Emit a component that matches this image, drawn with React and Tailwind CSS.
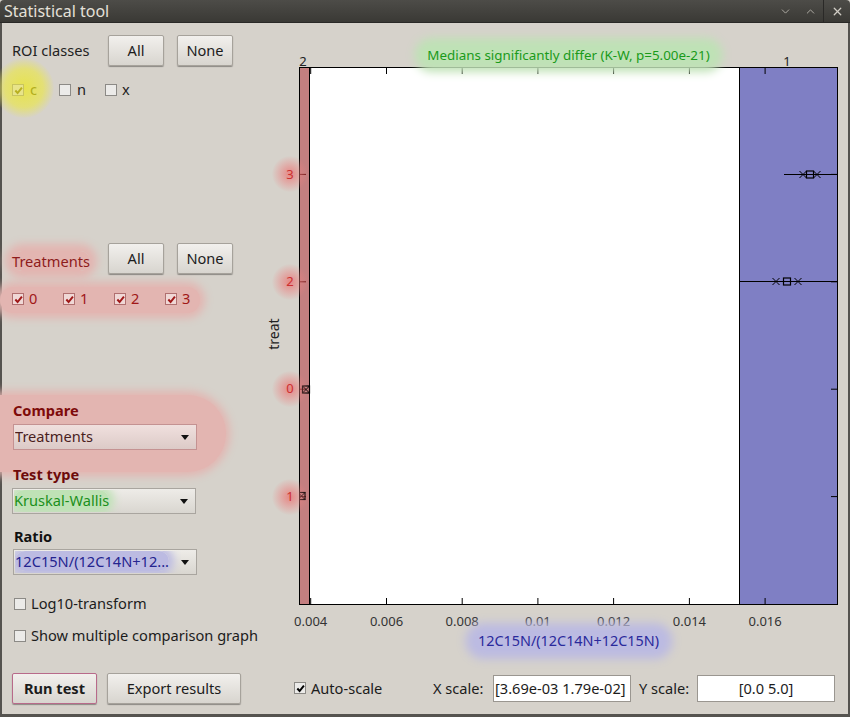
import React from 'react';
import { ChevronDown, ChevronUp, X } from 'lucide-react';

const xTicks = [
  { label: '0.004', x: 11.7 },
  { label: '0.006', x: 87.5 },
  { label: '0.008', x: 163.2 },
  { label: '0.01', x: 238.9 },
  { label: '0.012', x: 314.6 },
  { label: '0.014', x: 390.4 },
  { label: '0.016', x: 466.1 },
];

const yTicks = [
  { label: '3', y: 107.4 },
  { label: '2', y: 214.8 },
  { label: '0', y: 322.2 },
  { label: '1', y: 429.6 },
];

const Tick = ({ className = '' }) => (
  <svg viewBox="0 0 10 10" className={`w-[9px] h-[9px] ${className}`}>
    <path d="M1.5 5 L4 7.8 L8.8 1.8" stroke="currentColor" strokeWidth="2.2" fill="none" />
  </svg>
);

const Box = ({ checked, boxClass = 'bg-[#ecebe9] border-[#8c8a86] text-black' }) => (
  <span className={`w-[12px] h-[12px] border flex items-center justify-center shrink-0 ${boxClass}`}>
    {checked && <Tick />}
  </span>
);

const Button = ({ children, className = '' }) => (
  <button className={`h-[31px] rounded-[2px] border border-[#a6a29b] bg-gradient-to-b from-[#f2f0ed] to-[#d8d5cf] shadow-[0_1px_1px_rgba(0,0,0,0.35)] text-[14.6px] text-[#1c1c1c] flex items-center justify-center ${className}`}>
    {children}
  </button>
);

const Select = ({ children, className = '' }) => (
  <div className={`h-[26px] w-[184px] border border-[#a9a59f] bg-gradient-to-b from-[#eeece8] to-[#d9d6d0] flex items-center pl-[1px] pr-[7px] text-[14.6px] ${className}`}>
    <div className="flex-1 truncate">{children}</div>
    <svg viewBox="0 0 8 5" className="w-[8px] h-[5px]"><path d="M0 0 H8 L4 5 Z" fill="#111" /></svg>
  </div>
);

const Marker = ({ x, y, kind }) =>
  kind === 'x' ? (
    <path d={`M${x - 3.5} ${y - 3.5} L${x + 3.5} ${y + 3.5} M${x - 3.5} ${y + 3.5} L${x + 3.5} ${y - 3.5}`} stroke="#000" strokeWidth="1" />
  ) : (
    <rect x={x - 3.5} y={y - 3.5} width="7" height="7" fill="none" stroke="#000" strokeWidth="1.2" />
  );

function Chart() {
  return (
    <div className="flex-1 pl-[39px] pt-[44px]">
      <div className="relative w-[539px] h-[538px]">
        <svg width="539" height="538" className="block">
          <rect x="0" y="0" width="539" height="538" fill="#ffffff" />
          <rect x="0" y="0" width="10" height="538" fill="#c47f80" />
          <rect x="440" y="0" width="99" height="538" fill="#7f7fc4" />
          <line x1="10.5" y1="0" x2="10.5" y2="538" stroke="#000" />
          <line x1="440.5" y1="0" x2="440.5" y2="538" stroke="#000" />
          {xTicks.map((t) => (
            <g key={t.label}>
              <line x1={t.x} y1="537" x2={t.x} y2="531" stroke="#000" />
              <line x1={t.x} y1="1" x2={t.x} y2="7" stroke="#000" />
            </g>
          ))}
          {yTicks.map((t) => (
            <g key={t.label}>
              <line x1="1" y1={t.y} x2="7" y2={t.y} stroke="#6a1010" />
              <line x1="538" y1={t.y} x2="532" y2={t.y} stroke="#000" />
            </g>
          ))}
          {/* group 3 */}
          <line x1="485" y1="107.5" x2="538" y2="107.5" stroke="#000" />
          <Marker x={504} y={107.5} kind="x" />
          <Marker x={511} y={107.5} kind="box" />
          <Marker x={518} y={107.5} kind="x" />
          {/* group 2 */}
          <line x1="440" y1="214.5" x2="538" y2="214.5" stroke="#000" />
          <Marker x={477} y={214.5} kind="x" />
          <Marker x={488} y={214.5} kind="box" />
          <Marker x={499} y={214.5} kind="x" />
          {/* group 0 */}
          <Marker x={7} y={322.5} kind="box" />
          <Marker x={7} y={322.5} kind="x" />
          {/* group 1 */}
          <Marker x={2.5} y={429} kind="box" />
          <Marker x={2.5} y={429} kind="x" />
          <rect x="0.5" y="0.5" width="538" height="537" fill="none" stroke="#000" />
        </svg>

        {/* title */}
        <div className="absolute left-1/2 -translate-x-1/2 top-[-20px] whitespace-nowrap rounded-full bg-[#bfe2b6] shadow-[0_0_10px_9px_#bfe2b6] px-[4px] text-[13.4px] leading-[16px] text-[#1a9a1a]">
          Medians significantly differ (K-W, p=5.00e-21)
        </div>
        <div className="absolute left-[4px] top-[-13px] -translate-x-1/2 text-[13px] leading-[14px] text-[#222]">2</div>
        <div className="absolute left-[488px] top-[-13px] -translate-x-1/2 text-[13px] leading-[14px] text-[#222]">1</div>

        {/* y tick labels */}
        {yTicks.map((t) => (
          <div
            key={t.label}
            style={{ top: t.y - 18 }}
            className="absolute left-[-27px] w-[36px] h-[36px] flex items-center justify-center rounded-full bg-[radial-gradient(circle,rgba(236,110,110,0.75)_0%,rgba(236,130,130,0.35)_45%,rgba(214,210,203,0)_72%)] text-[13px] text-[#cc3030]"
          >
            {t.label}
          </div>
        ))}

        <div className="absolute left-[-41px] top-[258px] -rotate-90 text-[14px] text-[#222] leading-[18px]">treat</div>

        {/* x tick labels */}
        {xTicks.map((t) => (
          <div key={t.label} style={{ left: t.x }} className="absolute top-[546px] -translate-x-1/2 text-[13px] leading-[16px] text-[#333]">
            {t.label}
          </div>
        ))}
        <div className="absolute left-1/2 -translate-x-1/2 top-[565px] whitespace-nowrap rounded-full bg-[#bcbbe2] shadow-[0_0_10px_9px_#bcbbe2] px-[4px] text-[14.4px] leading-[18px] text-[#2a2a9c]">
          12C15N/(12C14N+12C15N)
        </div>
      </div>
    </div>
  );
}

function LeftPanel() {
  const redBox = 'bg-[#f0d8d6] border-[#b07070] text-[#a01818]';
  return (
    <div className="relative w-[258px] flex flex-col pl-[10px]">
      {/* glows */}
      <div className="absolute left-[-2px] top-[372px] w-[226px] h-[77px] rounded-r-full bg-[#e3b5b1] shadow-[0_0_8px_4px_#e3b5b1]" />
      <div className="absolute left-[-2px] top-[264px] w-[200px] h-[26px] rounded-full bg-[#e3b5b1] shadow-[0_0_8px_5px_#e3b5b1]" />
      <div className="absolute left-[-8px] top-[35px] w-[60px] h-[60px] rounded-full bg-[radial-gradient(circle,rgba(232,228,70,0.95)_0%,rgba(232,228,90,0.75)_45%,rgba(214,210,203,0)_72%)]" />

      <div className="relative flex items-center mt-[12px]">
        <span className="w-[96px] text-[14.6px] text-[#222]">ROI classes</span>
        <Button className="w-[56px]">All</Button>
        <Button className="w-[56px] ml-[13px]">None</Button>
      </div>

      <div className="relative flex items-center h-[18px] mt-[15px] text-[14.6px]">
        <span className="flex items-center gap-[6px] w-[47px]">
          <Box checked boxClass="bg-[#e8e48a] border-[#c8c460] text-[#b8b020]" />
          <span className="text-[#b2ad1c]">c</span>
        </span>
        <span className="flex items-center gap-[6px] w-[46px]">
          <Box />
          <span className="text-[#222]">n</span>
        </span>
        <span className="flex items-center gap-[5px]">
          <Box />
          <span className="text-[#222]">x</span>
        </span>
      </div>

      <div className="relative flex items-center mt-[144px]">
        <span className="w-[96px] text-[14.6px] text-[#8e1c1c] translate-y-[3px]">
          <span className="rounded-full bg-[#e3b5b1] shadow-[0_0_8px_7px_#e3b5b1]">Treatments</span>
        </span>
        <Button className="w-[56px]">All</Button>
        <Button className="w-[56px] ml-[13px]">None</Button>
      </div>

      <div className="relative flex items-center h-[18px] mt-[16px] text-[14.6px] text-[#a01818]">
        {['0', '1', '2', '3'].map((n) => (
          <span key={n} className="flex items-center gap-[5px] w-[51px]">
            <Box checked boxClass={redBox} />
            <span>{n}</span>
          </span>
        ))}
      </div>

      <div className="relative mt-[93px] text-[14.6px] leading-[18px] font-bold text-[#7e0a0a] pl-[1px]">Compare</div>
      <Select className="relative mt-[5px] ml-[1px] border-[#c49292] from-[#f0e0de] to-[#dccac7] text-[#4a1e1e]">Treatments</Select>

      <div className="relative mt-[15px] text-[14.6px] leading-[18px] font-bold text-[#6e0a0a] pl-[1px]">Test type</div>
      <Select className="relative mt-[5px] text-[#1b901b]">
        <span className="rounded-full bg-[#bfe2b6] shadow-[0_0_8px_5px_#bfe2b6]">Kruskal-Wallis</span>
      </Select>

      <div className="relative mt-[13px] text-[14.6px] leading-[18px] font-bold text-[#111] pl-[2px]">Ratio</div>
      <Select className="relative mt-[4px] ml-[1px] text-[#24248f]">
        <span className="rounded-full bg-[#bcbbe2] shadow-[0_0_8px_5px_#bcbbe2]">12C15N/(12C14N+12...</span>
      </Select>

      <div className="relative flex items-center gap-[5px] mt-[20px] h-[18px] pl-[2px] text-[14.6px] text-[#1c1c1c]">
        <Box />
        <span>Log10-transform</span>
      </div>
      <div className="relative flex items-center gap-[5px] mt-[14px] h-[18px] pl-[2px] text-[14.6px] text-[#1c1c1c]">
        <Box />
        <span>Show multiple comparison graph</span>
      </div>
    </div>
  );
}

export default function App() {
  return (
    <div className="w-[850px] h-[717px] flex flex-col bg-[#d6d2cb] font-['Noto_Sans',sans-serif] overflow-hidden">
      <div className="h-[23px] shrink-0 flex items-center rounded-t-[4px] bg-gradient-to-b from-[#4d4c48] to-[#3a3935] border-b border-[#2a2927]">
        <span className="pl-[4px] text-[16px] text-[#e4e0d8] leading-[20px]">Statistical tool</span>
        <div className="ml-auto flex items-center h-full text-[#bcb8b0]">
          <span className="w-[25px] flex justify-center"><ChevronDown size={13} strokeWidth={1.6} /></span>
          <span className="w-[25px] flex justify-center"><ChevronUp size={13} strokeWidth={1.6} /></span>
          <span className="h-full w-px bg-[#2a2927]" />
          <span className="w-[26px] flex justify-center text-[#d0ccc4]"><X size={13} strokeWidth={2.4} /></span>
        </div>
      </div>

      <div className="flex-1 flex flex-col border-l-2 border-r-2 border-b-[3px] border-[#55534f]">
        <div className="h-[637px] flex">
          <LeftPanel />
          <Chart />
        </div>

        <div className="flex items-center pl-[10px] mt-[13px] text-[14.6px] text-[#1c1c1c]">
          <Button className="w-[85px] font-bold border-[#b86a8a]">Run test</Button>
          <Button className="w-[134px] ml-[10px]">Export results</Button>
          <span className="flex items-center gap-[5px] ml-[53px] w-[139px]">
            <Box checked />
            <span>Auto-scale</span>
          </span>
          <span className="w-[60px]">X scale:</span>
          <div className="w-[138px] h-[27px] border border-[#9a9690] bg-white flex items-center pl-[1px] overflow-hidden whitespace-nowrap">
            [3.69e-03 1.79e-02]
          </div>
          <span className="ml-[8px] w-[58px]">Y scale:</span>
          <div className="w-[138px] h-[27px] border border-[#9a9690] bg-white flex items-center justify-center">
            [0.0 5.0]
          </div>
        </div>
      </div>
    </div>
  );
}
